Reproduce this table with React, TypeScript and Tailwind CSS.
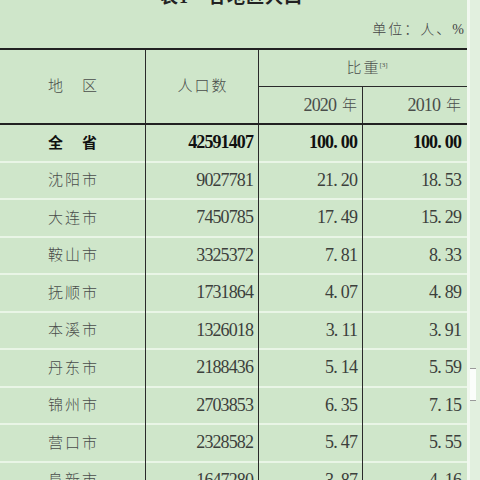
const rows: [string, string, string, string][] = [
  ['沈阳市', '9027781', '21.20', '18.53'],
  ['大连市', '7450785', '17.49', '15.29'],
  ['鞍山市', '3325372', '7.81', '8.33'],
  ['抚顺市', '1731864', '4.07', '4.89'],
  ['本溪市', '1326018', '3.11', '3.91'],
  ['丹东市', '2188436', '5.14', '5.59'],
  ['锦州市', '2703853', '6.35', '7.15'],
  ['营口市', '2328582', '5.47', '5.55'],
  ['阜新市', '1647280', '3.87', '4.16'],
];

// 小数点后留一点空，像宋体那样
const Num = ({ v }: { v: string }) => {
  const [a, b] = v.split('.');
  if (!b) return <>{v}</>;
  return (
    <>
      {a}
      <span className="pr-[4px]">.</span>
      {b}
    </>
  );
};

const Row = ({ cells, bold }: { cells: [string, string, string, string]; bold?: boolean }) => {
  const tone = bold ? 'font-bold text-[#111]' : 'text-[#3c3f3c]';
  const name = bold ? '' : 'font-light text-[#4a4d4a]';
  return (
    <div className={`grid h-[37.5px] grid-cols-[146px_113px_104px_104px] ${tone}`}>
      <div className="border-r-[1.5px] border-[#2a2a2a]">
        <div className={`flex h-full items-center justify-center border-b-2 border-[#e9f5e6] pl-[2px] text-[15px] tracking-[2px] ${name}`}>
          {cells[0]}
        </div>
      </div>
      <div className="border-r-[1.5px] border-[#2a2a2a]">
        <div className="flex h-full items-center justify-end border-b-2 border-[#e9f5e6] pr-[5px] text-[18px] tracking-[-0.9px]">
          {cells[1]}
        </div>
      </div>
      <div className="border-r-[1.5px] border-[#2a2a2a]">
        <div className="flex h-full items-center justify-end border-b-2 border-[#e9f5e6] pr-[5px] text-[18px] tracking-[-0.9px]">
          <Num v={cells[2]} />
        </div>
      </div>
      <div>
        <div className="flex h-full items-center justify-end border-b-2 border-[#e9f5e6] pr-[6px] text-[18px] tracking-[-0.9px]">
          <Num v={cells[3]} />
        </div>
      </div>
    </div>
  );
};

export default function App() {
  return (
    <div
      className="flex h-[480px] w-[480px] overflow-hidden bg-[#e2f0df]"
      style={{ fontFamily: '"Liberation Serif", "Noto Sans CJK SC", serif' }}
    >
      <div className="w-[467px] shrink-0 bg-[#cfe6ca]">
        {/* 标题和单位 */}
        <div className="flex h-[48px] flex-col">
          <div className="-mt-[12px] h-[18px] pl-[160px] text-[18px] font-bold leading-[18px] tracking-[1px] text-[#222]">
            表1　各地区人口
          </div>
          <div className="mt-[16px] h-[16px] pr-[1px] text-right text-[14px] font-light leading-[16px] tracking-[2px] text-[#444]">
            单位：人、%
          </div>
        </div>

        {/* 表头 */}
        <div className="grid grid-cols-[146px_113px_208px] border-y-2 border-[#222] text-[#4a4d4a]">
          <div className="flex h-[73px] items-center justify-center border-r-[1.5px] border-[#2a2a2a] pl-[2px] text-[15px] font-light tracking-[2px]">
            地　区
          </div>
          <div className="flex items-center justify-center border-r-[1.5px] border-[#2a2a2a] pl-[2px] text-[15px] font-light tracking-[2px]">
            人口数
          </div>
          <div className="flex flex-col">
            <div className="flex h-[37px] items-center justify-center border-b-[1.5px] border-[#2a2a2a] pl-[8px] text-[15px] font-light tracking-[2px]">
              比重<sup className="-ml-[1px] text-[7px] tracking-normal">[3]</sup>
            </div>
            <div className="grid flex-1 grid-cols-[104px_104px]">
              <div className="flex items-center justify-end border-r-[1.5px] border-[#2a2a2a] pr-[5px]">
                <span className="text-[18px] tracking-[-0.9px]">2020</span>
                <span className="ml-[6px] text-[15px] font-light">年</span>
              </div>
              <div className="flex items-center justify-end pr-[6px]">
                <span className="text-[18px] tracking-[-0.9px]">2010</span>
                <span className="ml-[6px] text-[15px] font-light">年</span>
              </div>
            </div>
          </div>
        </div>

        <Row cells={['全　省', '42591407', '100.00', '100.00']} bold />
        {rows.map((r) => (
          <Row key={r[0]} cells={r} />
        ))}
      </div>

      {/* 右边的浅色边 */}
      <div className="w-[3px] shrink-0 bg-[#f1f8ef]" />
      <div className="flex-1">
        <div className="mt-[368px] h-[33px] w-[6px] border-y border-[#9a9a9a] bg-[#fbfdfb]" />
      </div>
    </div>
  );
}
